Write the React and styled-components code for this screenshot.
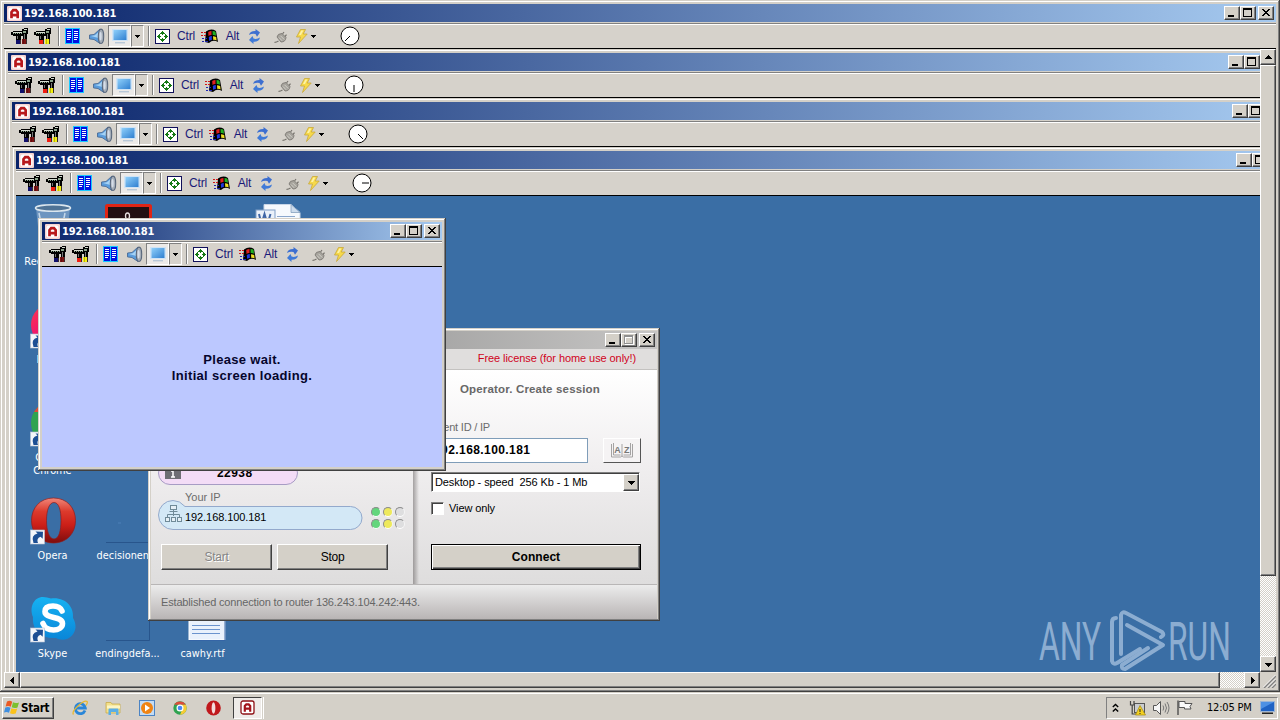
import styled, { createGlobalStyle, css } from "styled-components";

const GlobalStyle = createGlobalStyle`
  * {
    box-sizing: border-box;
  }

  body {
    margin: 0;
    width: 1280px;
    height: 720px;
    overflow: hidden;
    background: #d4d0c8;
    font-family: "Liberation Sans", Arial, sans-serif;
    font-size: 11px;
    color: #000;
  }

  svg {
    display: block;
    flex: none;
  }
`;

const tahoma = css`
  font-family: "DejaVu Sans Condensed", "DejaVu Sans", sans-serif;
  font-stretch: condensed;
`;

const raised = css`
  background: #d4d0c8;
  border: 1px solid;
  border-color: #fff #404040 #404040 #fff;
  box-shadow: inset -1px -1px 0 #808080;
`;

/* ---------- window frame ---------- */

const Screen = styled.div`
  width: 1280px;
  height: 720px;
  display: flex;
  flex-direction: column;
  overflow: hidden;
`;

const Frame = styled.div`
  width: ${({ $w }) => $w}px;
  height: ${({ $h }) => $h}px;
  flex: none;
  display: flex;
  flex-direction: column;
  padding: ${({ $pad }) => $pad ?? 4}px;
  background: #d4d0c8;
  box-shadow: inset -1px -1px 0 #404040, inset 1px 1px 0 #d4d0c8,
    inset -2px -2px 0 #808080, inset 2px 2px 0 #fff;
`;

const TitleBar = styled.div`
  height: 18px;
  flex: none;
  display: flex;
  align-items: center;
  padding: 0 2px 0 3px;
  background: ${({ $inactive }) =>
    $inactive
      ? "linear-gradient(90deg, #808080, #c6c5c4)"
      : "linear-gradient(90deg, #0a246a, #a6caf0)"};
`;

const TitleText = styled.span`
  ${tahoma}
  flex: 1;
  height: 18px;
  padding-left: 2px;
  font-size: 11px;
  font-weight: bold;
  line-height: 19px;
  letter-spacing: -0.1px;
  color: #fff;
`;

const CaptionButton = styled.div`
  ${raised}
  width: 16px;
  height: 14px;
  flex: none;
  margin-left: ${({ $gap }) => $gap || 0}px;
`;

const ToolBar = styled.div`
  height: 27px;
  flex: none;
  display: flex;
  align-items: center;
  padding-left: 7px;
  padding-top: 2px;
  border-bottom: 1px solid #000;
  background: linear-gradient(
    #d4d0c8 1px,
    #808080 1px 2px,
    #fff 2px 3px,
    #d6d2cb 3px
  );
`;

const Slot = styled.div`
  width: ${({ $w }) => $w}px;
  margin-left: ${({ $ml }) => $ml || 0}px;
  flex: none;
  display: flex;
  justify-content: center;
`;

const KeyName = styled(Slot)`
  font-size: 12px;
  line-height: 20px;
  letter-spacing: -0.15px;
  white-space: nowrap;
  color: #1a1a78;
`;

const Separator = styled.div`
  width: 2px;
  height: 20px;
  flex: none;
  margin-left: ${({ $ml }) => $ml}px;
  border-left: 1px solid #808080;
  border-right: 1px solid #fff;
`;

const Pressed = styled.div`
  width: ${({ $w }) => $w}px;
  height: 22px;
  margin-left: ${({ $ml }) => $ml || 0}px;
  flex: none;
  display: flex;
  align-items: center;
  justify-content: center;
  border: 1px solid;
  border-color: #808080 #fff #fff #808080;
  background: ${({ $lit }) => ($lit ? "#eceae8" : "#d6d2cb")};
`;

const AmmyyIcon = () => (
  <svg width="15" height="15" viewBox="0 0 15 15">
    <rect width="15" height="15" rx="1" fill="#f6d4d2" />
    <rect x="1.500" y="1.500" width="12" height="12" rx="2" fill="#fff" />
    <path
      d="M4.500 12.200V6.200L6.200 4.200h2.800l1.700 2v6M4.500 9.200h6"
      fill="none"
      stroke="#b8181c"
      strokeWidth="2.700"
    />
  </svg>
);

const Glyph = ({ kind }) => (
  <svg width="14" height="12" viewBox="0 0 14 12" shapeRendering="crispEdges">
    {kind === "min" && <rect x="3" y="8" width="6" height="2" />}
    {kind === "max" && <path d="M2 1h9v9h-9zM3 3v6h7v-6z" fillRule="evenodd" />}
    {kind === "maxoff" && (
      <>
        <path d="M3 2h9v9h-9zM4 4v6h7v-6z" fillRule="evenodd" fill="#fff" />
        <path d="M2 1h9v9h-9zM3 3v6h7v-6z" fillRule="evenodd" fill="#8f8f8f" />
      </>
    )}
    {kind === "close" && (
      <path d="M3 2h2v1h1v1h2v-1h1v-1h2v1h-1v1h-1v1h-1v1h1v1h1v1h1v1h-2v-1h-1v-1h-2v1h-1v1h-2v-1h1v-1h1v-1h1v-1h-1v-1h-1v-1h-1z" />
    )}
  </svg>
);

const CaptionButtons = ({ maxOff }) => (
  <>
    <CaptionButton>
      <Glyph kind="min" />
    </CaptionButton>
    <CaptionButton>
      <Glyph kind={maxOff ? "maxoff" : "max"} />
    </CaptionButton>
    <CaptionButton $gap={2}>
      <Glyph kind="close" />
    </CaptionButton>
  </>
);

/* ---------- toolbar icons ---------- */

const Drill = ({ left, right }) => (
  <svg width="17" height="18" viewBox="0 0 17 18" shapeRendering="crispEdges">
    <path d="M0 5h2v-1h9v-2h2v-1h4v6h-1v5h-4v-3h-2v4h-5v-4h-3v-1h-2z" fill="#000" />
    <path d="M2 5h9v1h-9zM13 2h3v1h-3z" fill="#d5dbd0" />
    <path d="M2 6h1v1h-1zM4 6h1v1h-1zM6 6h1v1h-1zM8 6h1v1h-1zM10 6h1v1h-1zM12 4h3v2h-3z" fill="#8ba38b" />
    <path d="M13 7h1v5h-1zM6 9h1v3h-1z" fill="#777" />
    <rect x="5" y="13" width="4" height="4" fill={left} />
    <rect x="11" y="12" width="4" height="5" fill={right} />
    <path d="M9 13h1v4h-1zM15 12h1v5h-1z" fill="#3a2c2c" />
    <path d="M12 12h1v5h-1z" fill="#000" opacity=".25" />
  </svg>
);

const BookIcon = () => (
  <svg width="15" height="16" viewBox="0 0 15 16" shapeRendering="crispEdges">
    <rect width="15" height="16" fill="#18c8ff" />
    <path d="M1 1h6v14h-6zM8 1h6v14h-6z" fill="#0010e0" />
    <path
      d="M2 3h4v1h-4zM2 5h4v1h-4zM2 7h4v1h-4zM2 9h4v1h-4zM2 11h3v1h-3zM9 3h4v1h-4zM9 5h4v1h-4zM9 7h4v1h-4zM9 9h4v1h-4zM9 11h3v1h-3z"
      fill="#fff"
    />
  </svg>
);

const SpeakerIcon = () => (
  <svg width="17" height="17" viewBox="0 0 17 17">
    <path d="M1.500 7l4.500-.5L12 1v14.500L6 11.500l-4.500-.6z" fill="#5a9cdc" stroke="#4a6a94" strokeWidth=".9" />
    <path d="M2.800 8l4-.8 3.700-3v5.800z" fill="#a4d2f6" />
    <ellipse cx="13" cy="8.300" rx="2.700" ry="7.200" fill="#a4adb8" stroke="#59677c" strokeWidth="1.100" />
    <ellipse cx="12.600" cy="8.300" rx="1.100" ry="4.200" fill="#d5dde8" />
  </svg>
);

const MonitorIcon = () => (
  <svg width="18" height="15" viewBox="0 0 18 15">
    <defs>
      <linearGradient id="lcd" x1="0" y1="0" x2="1" y2="1">
        <stop offset="0" stopColor="#8fd0fb" />
        <stop offset="1" stopColor="#2f7fd0" />
      </linearGradient>
    </defs>
    <rect x="1" y="0" width="16" height="12" fill="#cfe3f5" />
    <rect x="2.500" y="1" width="13" height="10" fill="url(#lcd)" />
    <rect x="4" y="13" width="10" height="1.400" fill="#b8c8d8" />
  </svg>
);

const Caret = () => (
  <svg width="6" height="3" viewBox="0 0 6 3" shapeRendering="crispEdges">
    <path d="M0 0h5v1h-1v1h-1v1h-1v-1h-1v-1h-1z" />
  </svg>
);

const ArrowsIcon = () => (
  <svg width="15" height="15" viewBox="0 0 15 15" shapeRendering="crispEdges">
    <rect x=".5" y=".5" width="14" height="14" fill="#fff" stroke="#10105a" />
    <path
      d="M7 2h1v1h1v1h1v1h-2v1h-1v-1h-2v-1h1v-1h1zM7 13h1v-1h1v-1h1v-1h-2v-1h-1v1h-2v1h1v1h1zM2 7v1h1v1h1v1h1v-2h1v-1h-1v-2h-1v1h-1v1zM13 7v1h-1v1h-1v1h-1v-2h-1v-1h1v-2h1v1h1v1z"
      fill="#147a14"
    />
  </svg>
);

const WinFlag = () => (
  <svg width="17" height="15" viewBox="0 0 17 15">
    <path d="M5 2.5Q10-1 15 2l2 11q-5-3-9 1l-4-1z" fill="#000" />
    <path d="M7.2 3q1.500-1 3.300-1v4q-1.800 0-3 .9z" fill="#e02020" />
    <path d="M11.500 2q1.800 0 3 .8l.5 4q-1.600-1-3.300-.8z" fill="#20b020" />
    <path d="M7.800 8q1.300-.9 3-.9v4q-1.500 0-2.600.8z" fill="#2038e0" />
    <path d="M12 7.200q1.700 0 3.200.8l.4 3.500q-1.500-.8-3.300-.6z" fill="#f0e020" />
    <path d="M0 3h2v1h-2zM3 3h2v1h-2zM0 6h2v1h-2zM3 6h2v1h-2z" fill="#d01818" />
    <path d="M1 9h2v1h-2zM4 9h2v1h-2zM1 12h2v1h-2zM4 12h3v1h-3z" fill="#2028b0" />
  </svg>
);

const RefreshIcon = () => (
  <svg width="15" height="15" viewBox="0 0 15 15">
    <path d="M2 6q1-4.200 6.500-4V0L13 3.500 10 7.800 8.500 5Q5 4.200 2 6z" fill="#3d6fd0" />
    <path d="M13 8.500q-1 4.500-6.500 4.300V15L2 11l3.500-4 1 2.600Q10 10.500 13 8.500z" fill="#3f7ad8" />
  </svg>
);

const PlugIcon = () => (
  <svg width="13" height="14" viewBox="0 0 13 14">
    <path d="M3 8l4 5q4.500 0 5-4.500L8 4.500Q3.500 4.500 3 8z" fill="#a6a39c" stroke="#77746e" strokeWidth=".8" />
    <path d="M5 8.500l3 3.200M6.500 6.800l3.700 3.700" stroke="#dcdad4" strokeWidth=".8" />
    <path d="M8.500 5L10 3M11 7.500l1.500-1.800M4.500 12q-2.500 1.500-4 1.300" fill="none" stroke="#77746e" strokeWidth="1.200" />
  </svg>
);

const BoltIcon = () => (
  <svg width="12" height="15" viewBox="0 0 12 15">
    <path d="M4.500.5h5L7.200 5h4L2.500 14.500l2-6.500h-4z" fill="#f6d94a" stroke="#c9a83a" strokeWidth=".8" />
    <path d="M5.300 1.500h2L5 6H3z" fill="#fdf2a6" />
  </svg>
);

const Clock = ({ x, y }) => (
  <svg width="20" height="20" viewBox="0 0 20 20">
    <circle cx="10" cy="10" r="9" fill="#fff" stroke="#000" />
    <path d={`M10 10L${x} ${y}`} stroke="#000" />
  </svg>
);

const RemoteToolBar = ({ hand }) => (
  <ToolBar>
    <Slot $w={17}>
      <Drill left="#10106c" right="#7c1414" />
    </Slot>
    <Slot $w={17} $ml={6}>
      <Drill left="#f01c10" right="#f4f010" />
    </Slot>
    <Separator $ml={7} />
    <Slot $w={15} $ml={5}>
      <BookIcon />
    </Slot>
    <Slot $w={17} $ml={8}>
      <SpeakerIcon />
    </Slot>
    <Pressed $w={23} $ml={3} $lit>
      <MonitorIcon />
    </Pressed>
    <Pressed $w={13}>
      <Caret />
    </Pressed>
    <Separator $ml={4} />
    <Slot $w={15} $ml={5}>
      <ArrowsIcon />
    </Slot>
    <KeyName $w={18} $ml={7}>Ctrl</KeyName>
    <Slot $w={17} $ml={6}>
      <WinFlag />
    </Slot>
    <KeyName $w={15} $ml={7}>Alt</KeyName>
    <Slot $w={15} $ml={7}>
      <RefreshIcon />
    </Slot>
    <Slot $w={13} $ml={12}>
      <PlugIcon />
    </Slot>
    <Slot $w={12} $ml={9}>
      <BoltIcon />
    </Slot>
    <Slot $w={6} $ml={3}>
      <Caret />
    </Slot>
    {hand && (
      <Slot $w={20} $ml={23}>
        <Clock x={hand[0]} y={hand[1]} />
      </Slot>
    )}
  </ToolBar>
);

const Viewport = styled.div`
  flex: 1;
  min-width: 0;
  min-height: 0;
  overflow: hidden;
`;

const RemoteWindow = ({ w = 1280, h = 692, hand, children }) => (
  <Frame $w={w} $h={h}>
    <TitleBar>
      <AmmyyIcon />
      <TitleText>192.168.100.181</TitleText>
      <CaptionButtons />
    </TitleBar>
    <RemoteToolBar hand={hand} />
    <Viewport>{children}</Viewport>
  </Frame>
);

/* ---------- scrollbars ---------- */

const ScrollGrid = styled.div`
  height: 639px;
  display: grid;
  grid-template-columns: 1256px 16px;
  grid-template-rows: 623px 16px;
`;

const Track = styled.div`
  display: flex;
  flex-direction: ${({ $dir }) => $dir};
  background: repeating-conic-gradient(#fff 0 25%, #d4d0c8 0 50%) 0 0 / 2px 2px;
`;

const ArrowButton = styled.div`
  ${raised}
  width: 16px;
  height: 16px;
  flex: none;
  display: flex;
  align-items: center;
  justify-content: center;
`;

const Thumb = styled.div`
  ${raised}
  flex: 0 0 ${({ $size }) => $size}px;
`;

const Spacer = styled.div`
  flex: 1;
`;

const Grip = styled.div`
  display: flex;
  align-items: flex-end;
  justify-content: flex-end;
`;

const Arrow = ({ turn }) => (
  <svg width="7" height="7" viewBox="0 0 7 7" shapeRendering="crispEdges">
    <path
      d="M3 1h1v1h1v1h1v1h1v1h-7v-1h1v-1h1v-1h1z"
      transform={`rotate(${turn} 3.500 3.500)`}
    />
  </svg>
);

/* ---------- desktop ---------- */

const Desktop = styled.div`
  position: relative;
  width: 1244px;
  height: 476px;
  overflow: hidden;
  background: #3a6ea5;
`;

const IconGrid = styled.div`
  display: grid;
  grid-template-columns: repeat(4, 75px);
  grid-auto-rows: 98px;
  margin-left: -1px;
  padding-top: 7px;
`;

const IconCell = styled.div`
  grid-column: ${({ $col }) => $col};
  grid-row: ${({ $row }) => $row};
  display: flex;
  flex-direction: column;
  align-items: center;
`;

const IconLabel = styled.span`
  ${tahoma}
  margin-top: 4px;
  font-size: 10.8px;
  line-height: 13px;
  letter-spacing: 0.03px;
  text-align: center;
  white-space: pre;
  color: #fff;
`;

const Placed = styled.div`
  position: absolute;
  left: ${({ $x }) => $x}px;
  top: ${({ $y }) => $y}px;
`;

const Shortcut = () => (
  <g>
    <rect x="1.500" y="33" width="14" height="14" fill="#f4f6fa" stroke="#b8c4d4" strokeWidth=".6" />
    <path d="M4.500 46q-3-8 4-9.500l-2-2 7.500.2-.3 7-2.200-2Q7 41.500 9 46z" fill="#1d4f94" />
  </g>
);

const BinIcon = () => (
  <svg width="48" height="48" viewBox="0 0 48 48">
    <path d="M7 5l4 37q13 6 26 0l4-37z" fill="#7fa3c9" opacity=".75" />
    <ellipse cx="24" cy="5" rx="17.500" ry="3.200" fill="#4f7396" stroke="#dbe6ee" strokeWidth="1.500" />
    <path d="M10 10l2 10M36 10l-2 10" stroke="#c5d8ea" strokeWidth="1.500" />
  </svg>
);

const RedIcon = () => (
  <svg width="48" height="48" viewBox="0 0 48 48">
    <rect x="2.500" y="2.500" width="44" height="44" rx="1" fill="#241012" stroke="#e02414" strokeWidth="3" />
    <ellipse cx="23.500" cy="13" rx="2" ry="3" fill="none" stroke="#e8e0e0" strokeWidth="1.300" />
  </svg>
);

const DocIcon = () => (
  <svg width="48" height="48" viewBox="0 0 48 48">
    <path d="M10 1.500h27l9 8V47H10z" fill="#f6f9fd" stroke="#c8d6e8" />
    <path d="M37 1.500v8h9z" fill="#cddced" stroke="#7a96b8" strokeWidth=".7" />
    <rect x="2" y="7" width="19" height="17" fill="#eaf1fa" stroke="#7f9dc6" />
    <path d="M5 11l2.500 10 3-10 3 10 3-10" fill="none" stroke="#3f66a6" strokeWidth="2" />
    <path d="M23 13.500h18M23 17.500h18" stroke="#8aa6cc" />
  </svg>
);

const FirefoxIcon = () => (
  <svg width="48" height="48" viewBox="0 0 48 48">
    <defs>
      <linearGradient id="fox" x1="0" y1="0" x2="1" y2="1">
        <stop offset="0" stopColor="#ff3b4a" />
        <stop offset=".4" stopColor="#f0186c" />
        <stop offset="1" stopColor="#ffb020" />
      </linearGradient>
    </defs>
    <circle cx="24" cy="24" r="22" fill="url(#fox)" />
    <Shortcut />
  </svg>
);

const ChromeDesktopIcon = () => (
  <svg width="48" height="48" viewBox="0 0 48 48">
    <circle cx="24" cy="24" r="22" fill="#2fa350" />
    <path d="M5 13A22 22 0 0 1 43 13H24z" fill="#dd4b3a" />
    <path d="M43 13A22 22 0 0 1 24 46L33 28z" fill="#f7cc35" />
    <circle cx="24" cy="24" r="9" fill="#4a8af4" stroke="#fff" strokeWidth="2" />
    <Shortcut />
  </svg>
);

const OperaIcon = () => (
  <svg width="48" height="48" viewBox="0 0 48 48">
    <defs>
      <linearGradient id="opera" x1="0" y1="0" x2="0" y2="1">
        <stop offset="0" stopColor="#f0877a" />
        <stop offset=".3" stopColor="#dc3a2c" />
        <stop offset=".6" stopColor="#cc1f18" />
        <stop offset="1" stopColor="#7c0d0d" />
      </linearGradient>
    </defs>
    <path
      d="M24.500 1C11 1 2.500 11 2.500 23.500S11 46 24.500 46s22-10 22-22.500S38 1 24.500 1zM25 5.500c5 0 7 8 7 18s-2 18.500-7 18.500-7.500-8.500-7.500-18.500S20 5.500 25 5.500z"
      fill="url(#opera)"
      fillRule="evenodd"
      stroke="#8e1c1c"
      strokeWidth=".7"
    />
    <Shortcut />
  </svg>
);

const SkypeIcon = () => (
  <svg width="48" height="48" viewBox="0 0 48 48">
    <defs>
      <linearGradient id="sky" x1="0" y1="0" x2="0" y2="1">
        <stop offset="0" stopColor="#16b2f2" />
        <stop offset="1" stopColor="#0a86d8" />
      </linearGradient>
    </defs>
    <path d="M14 2q4 0 8 1.500C37 2 45 12 44 23c4 7 3 13-1 17.500S32 46 27 43C11 44 3 34 4 22 0 12 5 2 14 2z" fill="url(#sky)" />
    <path
      d="M33 16q-2-5-9-5-8 0-8 5.500c0 8 17.500 4 17.500 12 0 4-4 6.500-9 6.500-7 0-9-3-10.500-6.500"
      fill="none"
      stroke="#fff"
      strokeWidth="5.600"
      strokeLinecap="round"
    />
    <Shortcut />
  </svg>
);

const EmptyIcon = ({ side }) => (
  <svg width="48" height="48" viewBox="0 0 48 48">
    <path d={side ? "M2 45.500h43.500V2" : "M2 45.500h44.500"} fill="none" stroke="#28558c" />
    {!side && <path d="M14 26h3" stroke="#4c80b8" />}
  </svg>
);

const RtfIcon = () => (
  <svg width="48" height="48" viewBox="0 0 48 48">
    <path d="M10 2h36v43H10z" fill="#e9f1fc" stroke="#fff" />
    <path d="M46 2v43.500H10" fill="none" stroke="#3565a6" />
    <path d="M13 30.500h28M13 34.500h28M13 38.500h28" stroke="#6a93ce" />
  </svg>
);

const desktopIcons = [
  { col: 1, row: 1, name: "Recycle Bin", icon: <BinIcon /> },
  { col: 2, row: 1, name: "", icon: <RedIcon /> },
  { col: 4, row: 1, name: "", icon: <DocIcon /> },
  { col: 1, row: 2, name: "Firefox", icon: <FirefoxIcon /> },
  { col: 1, row: 3, name: "Google\nChrome", icon: <ChromeDesktopIcon /> },
  { col: 1, row: 4, name: "Opera", icon: <OperaIcon /> },
  { col: 2, row: 4, name: "decisionen...", icon: <EmptyIcon /> },
  { col: 1, row: 5, name: "Skype", icon: <SkypeIcon /> },
  { col: 2, row: 5, name: "endingdefa...", icon: <EmptyIcon side /> },
  { col: 3, row: 5, name: "cawhy.rtf", icon: <RtfIcon /> },
];

/* ---------- session window ---------- */

const LicenseBar = styled.div`
  height: 21px;
  flex: none;
  padding-right: 21px;
  background: #e0dedd;
  border-bottom: 1px solid #c4c2c0;
  text-align: right;
  line-height: 19px;
  letter-spacing: -0.08px;
  color: #d0021b;
`;

const Panes = styled.div`
  height: 214px;
  flex: none;
  display: flex;
  background: linear-gradient(#fff, #f0eeef 45%, #dedddd);
`;

const ClientPane = styled.div`
  width: 262px;
  padding-left: 7px;
  display: flex;
  flex-direction: column;
  align-items: flex-start;
`;

const OperatorPane = styled.div`
  flex: 1;
  padding: 0 16px 0 18px;
  display: flex;
  flex-direction: column;
  background: linear-gradient(90deg, rgba(90, 85, 85, 0.5), transparent 6px);
`;

const PinField = styled.div`
  width: 140px;
  height: 24px;
  margin-top: 91px;
  padding-left: 6px;
  display: flex;
  align-items: center;
  border: 1px solid #a79cc4;
  border-radius: 12px;
  background: #f3dcf6;
  font-size: 12px;
  font-weight: bold;
  letter-spacing: 0.45px;
`;

const PinNumber = styled.span`
  margin-left: 36px;
`;

const GreyText = styled.div`
  height: 14px;
  margin: ${({ $m }) => $m};
  line-height: 14px;
  letter-spacing: ${({ $ls }) => $ls || 0}px;
  white-space: nowrap;
  color: #6c6c6c;
`;

const IpRow = styled.div`
  position: relative;
  z-index: 0;
  display: flex;
  align-items: flex-end;
  height: 30px;
  margin-top: -4px;
`;

const IpField = styled.div`
  width: 205px;
  height: 30px;
  padding: 8px 0 0 27px;
  line-height: 19px;
  letter-spacing: -0.08px;
`;

const IpShape = styled.svg`
  position: absolute;
  left: 0;
  top: 0;
  z-index: -1;
`;

const Lamps = styled.div`
  display: grid;
  grid-template-columns: repeat(3, 10px);
  gap: 2px;
  margin: 0 0 1px 8px;
`;

const Lamp = styled.div`
  width: 10px;
  height: 10px;
  border-radius: 50%;
  border: 1px solid;
  border-color: #8c8c8c #f4f4f4 #fff #8c8c8c;
  background: ${({ $c }) => $c};
`;

const ButtonRow = styled.div`
  display: flex;
  gap: 5px;
  margin: 14px 0 0 3px;
`;

const Button = styled.div`
  ${raised}
  width: 111px;
  height: 26px;
  line-height: 24px;
  font-size: 12px;
  letter-spacing: -0.25px;
  text-align: center;
  color: ${({ $off }) => ($off ? "#858585" : "#000")};
  text-shadow: ${({ $off }) => ($off ? "1px 1px 0 #fff" : "none")};
`;

const ConnectButton = styled.div`
  height: 26px;
  margin-top: 29px;
  border: 1px solid #000;
  box-shadow: inset 1px 1px 0 #fff, inset -1px -1px 0 #404040,
    inset -2px -2px 0 #808080;
  background: #d4d0c8;
  text-align: center;
  line-height: 24px;
  font-size: 12px;
  font-weight: bold;
  letter-spacing: 0.05px;
`;

const Heading = styled.div`
  height: 14px;
  margin-top: 12px;
  padding-left: 29px;
  line-height: 14px;
  font-size: 11.5px;
  font-weight: bold;
  letter-spacing: 0.16px;
  white-space: nowrap;
  color: #686868;
`;

const AddressRow = styled.div`
  display: flex;
  justify-content: space-between;
  margin-top: 4px;
`;

const AddressInput = styled.div`
  width: 157px;
  height: 25px;
  padding-left: 2px;
  border: 1px solid #7f9db9;
  background: #fff;
  line-height: 22px;
  font-size: 12px;
  font-weight: bold;
  letter-spacing: 0.42px;
`;

const AzButton = styled.div`
  width: 38px;
  height: 25px;
  display: flex;
  align-items: center;
  justify-content: center;
  border: 1px solid;
  border-color: #fff #555 #555 #fff;
  background: #f5f3f4;
`;

const Select = styled.div`
  width: 209px;
  height: 20px;
  margin-top: 9px;
  padding: 0 0 0 2px;
  display: flex;
  align-items: center;
  border: 1px solid;
  border-color: #808080 #fff #fff #808080;
  box-shadow: inset 1px 1px 0 #404040;
  background: #fff;
  letter-spacing: -0.1px;
  white-space: pre;
`;

const SelectText = styled.span`
  flex: 1;
  padding-left: 1px;
`;

const DropButton = styled(ArrowButton)`
  height: 17px;
`;

const CheckRow = styled.div`
  display: flex;
  align-items: center;
  gap: 5px;
  height: 14px;
  margin-top: 9px;
  letter-spacing: -0.1px;
`;

const CheckBox = styled.div`
  width: 13px;
  height: 13px;
  border: 1px solid;
  border-color: #808080 #fff #fff #808080;
  box-shadow: inset 1px 1px 0 #404040;
  background: #fff;
`;

const StatusBar = styled.div`
  flex: 1;
  padding-left: 10px;
  border-top: 1px solid #b8b6b6;
  background: linear-gradient(#ececec, #d2d0d0 50%, #b9b5b5);
  line-height: 34px;
  letter-spacing: -0.16px;
  color: #666;
`;

const SessionWindow = () => (
  <Frame $w={512} $h={293} $pad={3}>
    <TitleBar $inactive>
      <TitleText />
      <CaptionButtons maxOff />
    </TitleBar>
    <LicenseBar>Free license (for home use only!)</LicenseBar>
    <Panes>
      <ClientPane>
        <PinField>
          <svg width="16" height="14" viewBox="0 0 16 14">
            <rect x="0" y="2" width="16" height="11" fill="#6e6e74" />
            <path d="M8 4v7M6 5h2M6 11h4" stroke="#fff" strokeWidth="1.500" />
          </svg>
          <PinNumber>22938</PinNumber>
        </PinField>
        <GreyText $m="5px 0 0 27px">Your IP</GreyText>
        <IpRow>
          <IpShape width="205" height="30" viewBox="0 0 205 30">
            <path
              d="M15 .5Q22 .5 27 6.500H192.500A11.500 11.500 0 0 1 192.500 29.500H15A14.500 14.500 0 0 1 15 .5z"
              fill="#d3e8f6"
              stroke="#93a9cc"
            />
            <g fill="#e4eff6" stroke="#6f8a98">
              <rect x="12.500" y="5.500" width="6" height="4" />
              <path d="M15.500 10v6M9.500 17.500v-3h12v3M11.500 11.500h8" fill="none" />
              <rect x="7.500" y="17.500" width="4" height="4" />
              <rect x="13.500" y="17.500" width="4" height="4" />
              <rect x="19.500" y="17.500" width="4" height="4" />
            </g>
          </IpShape>
          <IpField>192.168.100.181</IpField>
          <Lamps>
            <Lamp $c="#63d67c" />
            <Lamp $c="#eee95c" />
            <Lamp $c="#dededf" />
            <Lamp $c="#63d67c" />
            <Lamp $c="#eee95c" />
            <Lamp $c="#dededf" />
          </Lamps>
        </IpRow>
        <ButtonRow>
          <Button $off>Start</Button>
          <Button>Stop</Button>
        </ButtonRow>
      </ClientPane>
      <OperatorPane>
        <Heading>Operator. Create session</Heading>
        <GreyText $m="24px 0 0 0" $ls={-0.2}>Client ID / IP</GreyText>
        <AddressRow>
          <AddressInput>192.168.100.181</AddressInput>
          <AzButton>
            <svg width="22" height="15" viewBox="0 0 22 15">
              <path d="M.5 1v13h9l1.500-1 1.500 1h9V1M2.500 0v12h7M19.500 0v12h-7M11 1v12" fill="none" stroke="#a5a3a3" />
              <text x="3.200" y="9.500" fontSize="9" fontWeight="bold" fill="#777">A</text>
              <text x="13" y="9.500" fontSize="9" fontWeight="bold" fill="#777">Z</text>
            </svg>
          </AzButton>
        </AddressRow>
        <Select>
          <SelectText>{"Desktop - speed  256 Kb - 1 Mb"}</SelectText>
          <DropButton>
            <Arrow turn={180} />
          </DropButton>
        </Select>
        <CheckRow>
          <CheckBox />
          View only
        </CheckRow>
        <ConnectButton>Connect</ConnectButton>
      </OperatorPane>
    </Panes>
    <StatusBar>Established connection to router 136.243.104.242:443.</StatusBar>
  </Frame>
);

const Loading = styled.div`
  height: 100%;
  padding-top: 2px;
  display: flex;
  align-items: center;
  justify-content: center;
  background: #bcc8ff;
  text-align: center;
  font-size: 13px;
  font-weight: bold;
  line-height: 16px;
  letter-spacing: 0.32px;
  color: #05052c;
`;

const Watermark = () => (
  <svg width="204" height="66" viewBox="0 0 204 66" opacity=".7">
    <g fill="#b0c9e4" fontFamily="Roboto, sans-serif" fontSize="53">
      <text transform="translate(1 50) scale(.6 1)">ANY</text>
      <text transform="translate(130 50) scale(.6 1)">RUN</text>
    </g>
    <g fill="none" stroke="#b0c9e4" strokeWidth="4" strokeLinecap="round" strokeLinejoin="round">
      <path d="M78 8q-4 0-4 4v39q1 4 5 2l23-14" />
      <path d="M83 44V5q1-4 5-2l36 19q3 3-1 5" />
      <path d="M89 15l36 20-38 24q-4 0-3-4l26-17" />
    </g>
  </svg>
);

const RemoteDesktop = () => (
  <Desktop>
    <IconGrid>
      {desktopIcons.map(({ col, row, name, icon }) => (
        <IconCell key={`${col}-${row}`} $col={col} $row={row}>
          {icon}
          <IconLabel>{name}</IconLabel>
        </IconCell>
      ))}
    </IconGrid>
    <Placed $x={132} $y={132}>
      <SessionWindow />
    </Placed>
    <Placed $x={22} $y={22}>
      <RemoteWindow w={408} h={253}>
        <Loading>
          Please wait.
          <br />
          Initial screen loading.
        </Loading>
      </RemoteWindow>
    </Placed>
    <Placed $x={1022} $y={414}>
      <Watermark />
    </Placed>
  </Desktop>
);

/* ---------- taskbar ---------- */

const TaskBar = styled.div`
  height: 28px;
  flex: none;
  display: flex;
  align-items: center;
  padding: 3px 2px 0 2px;
  background: linear-gradient(#d4d0c8 1px, #fff 1px 2px, #d4d0c8 2px);
`;

const StartButton = styled.div`
  ${raised}
  ${tahoma}
  width: 52px;
  height: 22px;
  display: flex;
  align-items: center;
  gap: 1px;
  padding-left: 1px;
  font-size: 11.5px;
  font-weight: bold;
  letter-spacing: -0.25px;
`;

const QuickLaunch = styled.div`
  display: grid;
  grid-template-columns: repeat(5, 33.5px);
  align-items: center;
  justify-items: center;
  margin-left: 9px;
`;

const TaskButton = styled.div`
  width: 29px;
  height: 22px;
  margin-left: 2.5px;
  display: flex;
  align-items: center;
  justify-content: center;
  border: 1px solid;
  border-color: #404040 #fff #fff #404040;
  background: #eeebe8;
`;

const BandEdge = styled.div`
  width: 2px;
  height: 22px;
  border-right: 1px solid #fff;
  background: #d4d0c8;
`;

const Tray = styled.div`
  width: 172px;
  height: 22px;
  margin-left: auto;
  padding: 0 1px 0 5px;
  display: flex;
  align-items: center;
  border: 1px solid;
  border-color: #808080 #fff #fff #808080;
`;

const TrayTime = styled.span`
  ${tahoma}
  width: 46px;
  margin: 0 7px 0 14px;
  font-size: 11px;
  letter-spacing: -0.2px;
  white-space: nowrap;
`;

const TrayIcon = styled.div`
  margin-left: ${({ $ml }) => $ml || 0}px;
`;

const IeIcon = () => (
  <svg width="16" height="16" viewBox="0 0 16 16">
    <path d="M13 10.500A5 5 0 1 1 13.300 8H4" fill="none" stroke="#2a86d8" strokeWidth="2.800" />
    <path d="M1.500 14.500Q-.5 12 6 6T15 1.500q1 1-1 4" fill="none" stroke="#e8b830" strokeWidth="1.300" />
  </svg>
);

const ExplorerIcon = () => (
  <svg width="17" height="16" viewBox="0 0 17 16">
    <path d="M1 2.500h5l1 1.500h8v9H1z" fill="#f3e08a" stroke="#c9ac4c" strokeWidth=".8" />
    <path d="M2 5.500h13v3H2z" fill="#fcf5c4" />
    <path d="M3.500 15V9.500q0-1 1-1h8q1 0 1 1V15h-2.500v-3h-5v3z" fill="#5aaee6" />
  </svg>
);

const PlayerIcon = () => (
  <svg width="16" height="16" viewBox="0 0 16 16">
    <rect x=".5" y=".5" width="15" height="15" fill="#c4dcf4" stroke="#4c84c4" />
    <circle cx="8" cy="8" r="6" fill="#f08414" />
    <path d="M6 4.500l5 3.500-5 3.500z" fill="#fff" />
  </svg>
);

const ChromeSmall = () => (
  <svg width="14" height="14" viewBox="0 0 48 48">
    <circle cx="24" cy="24" r="23" fill="#2fa350" />
    <path d="M4 13A23 23 0 0 1 44 13H24z" fill="#dd4b3a" />
    <path d="M44 13A23 23 0 0 1 24 47L34 24 30 13z" fill="#f7cc35" />
    <circle cx="24" cy="24" r="10" fill="#4a8af4" stroke="#fff" strokeWidth="4" />
  </svg>
);

const OperaSmall = () => (
  <svg width="15" height="16" viewBox="0 0 15 16">
    <ellipse cx="7.500" cy="8" rx="7.300" ry="7.500" fill="#c0181c" />
    <ellipse cx="7.500" cy="8" rx="1.900" ry="5.800" fill="#f4dcdc" />
  </svg>
);

const StartFlag = () => (
  <svg width="16" height="15" viewBox="0 0 16 15">
    <path d="M3 1.500q3-1.500 5.200.3L6.800 6.800Q4.500 5.300 1.600 6.500z" fill="#ea5a24" />
    <path d="M9 2.200q2.500 1.500 6 .2l-1.500 5Q10.500 8.500 7.700 7.200z" fill="#7cc030" />
    <path d="M1.300 7.500q3-1.200 5.200.3L5 12.800q-2.400-1.500-5-.3z" fill="#3f8fe0" />
    <path d="M7.400 8.300q2.800 1.300 5.800.2l-1.500 5q-3 1.100-5.700-.3z" fill="#fbc21a" />
  </svg>
);

const App = () => (
  <>
    <GlobalStyle />
    <Screen>
      <RemoteWindow hand={[5, 15]}>
        <ScrollGrid>
          <Viewport>
            <RemoteWindow hand={[10, 17]}>
              <RemoteWindow hand={[15, 15]}>
                <RemoteWindow hand={[17, 10]}>
                  <RemoteDesktop />
                </RemoteWindow>
              </RemoteWindow>
            </RemoteWindow>
          </Viewport>
          <Track $dir="column">
            <ArrowButton>
              <Arrow turn={0} />
            </ArrowButton>
            <Thumb $size={511} />
            <Spacer />
            <ArrowButton>
              <Arrow turn={180} />
            </ArrowButton>
          </Track>
          <Track $dir="row">
            <ArrowButton>
              <Arrow turn={270} />
            </ArrowButton>
            <Thumb $size={1200} />
            <Spacer />
            <ArrowButton>
              <Arrow turn={90} />
            </ArrowButton>
          </Track>
          <Grip>
            <svg width="13" height="13" viewBox="0 0 13 13">
              <path d="M1 13L13 1M5 13l8-8M9 13l4-4" stroke="#808080" strokeWidth="1.500" />
              <path d="M0 12.500L12.500 0M4 12.500l8.500-8.500M8 12.500l4.500-4.500" stroke="#fff" strokeWidth=".8" />
            </svg>
          </Grip>
        </ScrollGrid>
      </RemoteWindow>
      <TaskBar>
        <StartButton>
          <StartFlag />
          Start
        </StartButton>
        <QuickLaunch>
          <IeIcon />
          <ExplorerIcon />
          <PlayerIcon />
          <ChromeSmall />
          <OperaSmall />
        </QuickLaunch>
        <TaskButton>
          <svg width="15" height="15" viewBox="0 0 15 15">
            <rect x="1" y="1" width="13" height="13" rx="2" fill="#fff" stroke="#8e1216" strokeWidth="1.300" />
            <path d="M4.800 11.700V6L6.300 4.400h2.400L10.200 6v5.700M5 8.700h5" fill="none" stroke="#a3151b" strokeWidth="2.200" />
          </svg>
        </TaskButton>
        <BandEdge />
        <Tray>
          <svg width="7" height="10" viewBox="0 0 7 10">
            <path d="M.8 4l2.700-2.500L6.200 4M.8 8.500L3.500 6l2.700 2.500" fill="none" stroke="#000" strokeWidth="1.400" />
          </svg>
          <TrayIcon $ml={10}>
            <svg width="17" height="16" viewBox="0 0 17 16">
              <rect x="5.500" y="3.500" width="10" height="9" fill="#c9ccd0" stroke="#555" />
              <path d="M1.500 1v4h3.500V1M3.200 5v9h5" fill="none" stroke="#444" strokeWidth="1.200" />
              <path d="M11 5.500l5.500 9.500h-10z" fill="#f4d020" stroke="#a08810" strokeWidth=".7" />
              <path d="M11 9v3M11 13v1" stroke="#222" />
            </svg>
          </TrayIcon>
          <TrayIcon $ml={7}>
            <svg width="17" height="14" viewBox="0 0 17 14">
              <path d="M.5 4.500h3l4-4v13l-4-4h-3z" fill="#f6f6f6" stroke="#555" />
              <path d="M10 4.500q1.500 2.500 0 5M12 2.500q3 4.500 0 9M14 1q4 6 0 12" fill="none" stroke="#777" />
            </svg>
          </TrayIcon>
          <TrayIcon $ml={7}>
            <svg width="16" height="15" viewBox="0 0 16 15">
              <path d="M1 .5v14.500" stroke="#444" strokeWidth="1.300" />
              <path d="M2 1.500h6v2h7l-2 3 1 2.500H7.500V7.500H2z" fill="#fafafa" stroke="#555" />
            </svg>
          </TrayIcon>
          <TrayTime>12:05 PM</TrayTime>
          <svg width="15" height="13" viewBox="0 0 15 13">
            <rect x=".5" y=".5" width="14" height="10" fill="#1f62c4" stroke="#9cb4d4" />
            <path d="M1 1h13L1 8z" fill="#4d90e4" />
            <rect x="2" y="11.500" width="11" height="1.500" fill="#222" />
          </svg>
        </Tray>
      </TaskBar>
    </Screen>
  </>
);

export default App;
